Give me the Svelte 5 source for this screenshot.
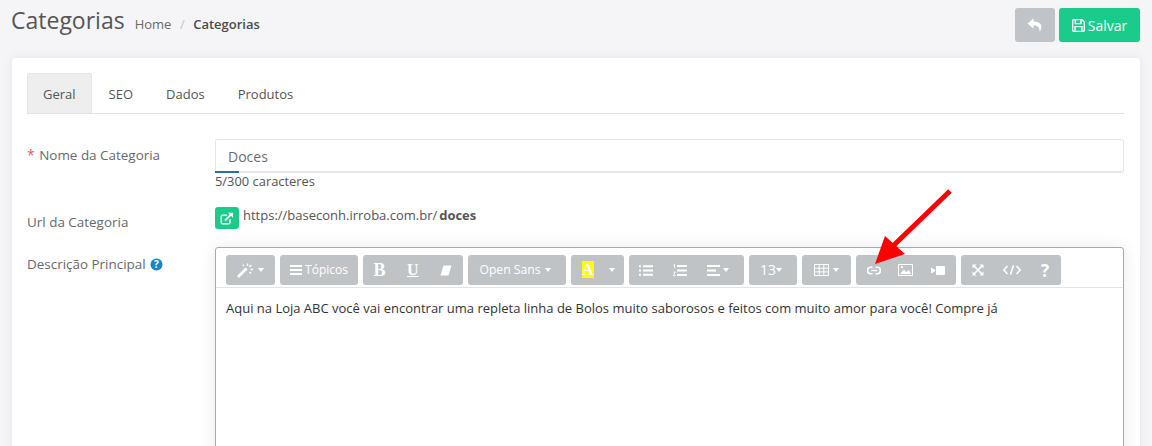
<script>
  const tabs = ['Geral', 'SEO', 'Dados', 'Produtos'];
</script>

<div class="page">
  <header class="top">
    <div class="heading">
      <h1>Categorias</h1>
      <nav class="crumbs"><span>Home</span><i>/</i><b>Categorias</b></nav>
    </div>
    <div class="actions">
      <button class="back" aria-label="Voltar">
        <svg width="16" height="14" viewBox="0 0 16 14"><path d="M6.5 0.5 L0.5 5.5 L6.5 10.5 V7.5 C10 7.3 12.6 8.6 12.7 13.5 C15.5 10 15.8 3.6 6.5 3.4 Z" fill="#fff"/></svg>
      </button>
      <button class="save">
        <svg width="13" height="13" viewBox="0 0 13 13"><path d="M1.5 .7H10L12.3 3V11.5a.8.8 0 0 1-.8.8H1.5a.8.8 0 0 1-.8-.8V1.5a.8.8 0 0 1 .8-.8Z" fill="none" stroke="#fff" stroke-width="1.3"/><path d="M3.2 1V4.7H9V1M3 12V7.7H10V12" fill="none" stroke="#fff" stroke-width="1.3"/></svg>
        Salvar
      </button>
    </div>
  </header>

  <section class="card">
    <ul class="tabs">
      {#each tabs as t, i}
        <li class:active={i === 0}>{t}</li>
      {/each}
    </ul>

    <div class="row name">
      <div class="label"><em>*</em> Nome da Categoria</div>
      <div class="field">
        <div class="input">Doces<span class="focus"></span></div>
        <div class="count">5/300 caracteres</div>
      </div>
    </div>

    <div class="row url">
      <div class="label">Url da Categoria</div>
      <div class="urlval">
        <span class="ext">
          <svg width="14" height="13" viewBox="0 0 14 13"><path d="M10 7.5V10.5a1.3 1.3 0 0 1-1.3 1.3H2.6a1.3 1.3 0 0 1-1.3-1.3V4.6a1.3 1.3 0 0 1 1.3-1.3H7" fill="none" stroke="#fff" stroke-width="1.5"/><path d="M5 8.5 11 2.5" stroke="#fff" stroke-width="1.8"/><path d="M8 .8H13V5.8Z" fill="#fff"/></svg>
        </span>
        <span class="link">https://baseconh.irroba.com.br/ <b>doces</b></span>
      </div>
    </div>

    <div class="row desc">
      <div class="label">Descrição Principal
        <svg class="help" width="13" height="13" viewBox="0 0 13 13"><circle cx="6.5" cy="6.5" r="6" fill="#1c84c6"/><text x="6.5" y="10" text-anchor="middle" font-size="10" font-weight="700" font-family="Open Sans" fill="#fff">?</text></svg>
      </div>
      <div class="editor">
        <div class="toolbar">
          <div class="grp w49">
            <svg width="17" height="15" viewBox="0 0 17 15"><path d="M1 14 9.5 5.5" stroke="#fff" stroke-width="2.8"/><path d="M6 1.5 6.5 3M10.5 .5V3M14.5 2 12.5 4M16 6.5H13.5M14 10.5 12.5 9" stroke="#fff" stroke-width="1.5"/></svg>
            <span class="caret"></span>
          </div>
          <div class="grp w78 txt">
            <svg width="12" height="10" viewBox="0 0 12 10"><path d="M0 1H12M0 5H12M0 9H12" stroke="#fff" stroke-width="2"/></svg>
            <span class="lbl">Tópicos</span>
          </div>
          <div class="grp w100 spread">
            <span class="serif">B</span>
            <span class="serif u">U</span>
            <svg width="12" height="11" viewBox="0 0 12 11"><path d="M3.5 .5H11.5L8.5 10.5H.5Z" fill="#fff"/></svg>
          </div>
          <div class="grp w98 txt shift">
            <span class="lbl font">Open Sans</span><span class="caret"></span>
          </div>
          <div class="grp w53 color">
            <span class="hl">A</span><span class="caret"></span>
          </div>
          <div class="grp w115 spread lists">
            <svg width="14" height="11" viewBox="0 0 14 11"><path d="M0 1.2H2M0 5.5H2M0 9.8H2M4 1.2H14M4 5.5H14M4 9.8H14" stroke="#fff" stroke-width="2"/></svg>
            <svg width="14" height="13" viewBox="0 0 14 13"><path d="M4 2H14M4 6.5H14M4 11H14" stroke="#fff" stroke-width="2"/><path d="M.5 .8 1.5 .3V4M.3 8H2.4L.3 11.6H2.6" fill="none" stroke="#fff" stroke-width=".9"/></svg>
            <span class="align"><svg width="13" height="11" viewBox="0 0 13 11"><path d="M0 1H13M0 5.5H9M0 10H13" stroke="#fff" stroke-width="2"/></svg><span class="caret"></span></span>
          </div>
          <div class="grp w48 txt shift">
            <span class="lbl size">13</span><span class="caret tight"></span>
          </div>
          <div class="grp w49">
            <svg width="15" height="12" viewBox="0 0 15 12"><path d="M.5.5H14.5V11.5H.5ZM.5 4.2H14.5M.5 7.9H14.5M5.2.5V11.5M9.8.5V11.5" fill="none" stroke="#fff"/></svg>
            <span class="caret"></span>
          </div>
          <div class="grp w100 spread">
            <svg width="14" height="9" viewBox="0 0 15 9"><path d="M6 1H4a3.5 3.5 0 0 0 0 7H6M9 1H11a3.5 3.5 0 0 1 0 7H9M4.5 4.5H10.5" fill="none" stroke="#fff" stroke-width="1.8"/></svg>
            <svg width="15" height="12" viewBox="0 0 15 12"><path d="M.5.5H14.5V11.5H.5Z" fill="none" stroke="#fff"/><path d="M2 10 6 5.5 8.5 8 11 6 13 10Z" fill="#fff"/><circle cx="4" cy="3.2" r="1.1" fill="#fff"/></svg>
            <svg width="14" height="9" viewBox="0 0 14 9"><rect x="5" y="0" width="9" height="9" rx="1" fill="#fff"/><path d="M0 1.5 4 3.7V5.3L0 7.5Z" fill="#fff"/></svg>
          </div>
          <div class="grp w100 spread last">
            <svg width="12" height="12" viewBox="0 0 12 12"><path d="M.5.5H4.5L.5 4.5ZM11.5.5H7.5L11.5 4.5ZM.5 11.5H4.5L.5 7.5ZM11.5 11.5H7.5L11.5 7.5Z" fill="#fff"/><path d="M2 2 10 10M10 2 2 10" stroke="#fff" stroke-width="1.6"/></svg>
            <svg width="18" height="10" viewBox="0 0 18 10"><path d="M4.5 1 .8 5 4.5 9M13.5 1 17.2 5 13.5 9M10.5 .3 7.5 9.7" fill="none" stroke="#fff" stroke-width="1.5"/></svg>
            <span class="q">?</span>
          </div>
        </div>
        <div class="content">Aqui na Loja ABC você vai encontrar uma repleta linha de Bolos muito saborosos e feitos com muito amor para você! Compre já</div>
      </div>
    </div>
  </section>

  <svg class="arrow" width="90" height="86" viewBox="0 0 90 86">
    <path d="M80 4 24 58" stroke="#f00" stroke-width="5"/>
    <path d="M5 77 15 49 35 67Z" fill="#f00"/>
  </svg>
</div>

<style>
  :global(body) { margin: 0; }
  .page {
    position: relative;
    width: 1152px;
    height: 446px;
    overflow: hidden;
    background: #f5f5f7;
    font-family: "Open Sans", sans-serif;
    font-size: 13px;
    color: #5c5c5c;
    box-sizing: border-box;
    padding: 0 12px;
  }
  .top {
    height: 58px;
    display: flex;
    justify-content: space-between;
    align-items: flex-start;
    box-sizing: border-box;
  }
  .heading { display: flex; align-items: baseline; margin-left: -1px; padding-top: 4px; }
  h1 { margin: 0; font-size: 23px; font-weight: 400; color: #555; line-height: 33px; }
  .crumbs { margin-left: 10px; font-size: 13px; color: #676a6c; }
  .crumbs i { font-style: normal; color: #c4c4c4; margin: 0 8.5px; }
  .crumbs b { font-weight: 600; color: #4c4c4c; }
  .actions { display: flex; gap: 4px; padding-top: 8px; }
  button {
    height: 34px;
    border: 0;
    border-radius: 3px;
    color: #fff;
    font: inherit;
    font-size: 14px;
    display: flex;
    align-items: center;
    justify-content: center;
    padding: 0;
  }
  .back { width: 40px; background: #c0c4c8; }
  .save { width: 81px; background: #1bcb8c; gap: 3px; }
  .card {
    height: 420px;
    background: #fff;
    border-radius: 4px;
    padding: 15px 16px 0 15px;
    box-shadow: 0 0 12px rgba(0, 0, 0, 0.07);
    box-sizing: border-box;
  }
  .tabs {
    list-style: none;
    margin: 0;
    padding: 0;
    display: flex;
    gap: 1px;
    height: 41px;
    border-bottom: 1px solid #e4e4e8;
    box-sizing: border-box;
  }
  .tabs li {
    height: 40px;
    line-height: 41px;
    padding: 0 15px;
    border: 1px solid transparent;
    border-bottom: 0;
    border-radius: 3px 3px 0 0;
    box-sizing: border-box;
    color: #555;
  }
  .tabs li.active { background: #eee; border-color: #e4e4e8; }
  .row { display: flex; }
  .label { width: 188px; flex: none; color: #676a6c; font-size: 13.45px; }
  .label em { font-style: normal; color: #f0544f; font-size: 14px; margin-right: 1px; }
  .name { margin-top: 25px; }
  .name .label { padding-top: 6px; }
  .field { flex: 1; }
  .input {
    position: relative;
    height: 34px;
    border: 1px solid #e5e6e7;
    border-bottom: 2px solid #e6e6ee;
    border-radius: 3px;
    box-sizing: border-box;
    padding: 0 12px;
    line-height: 34px;
    font-size: 14px;
    color: #6a6e72;
  }
  .focus {
    position: absolute;
    left: -1px;
    bottom: -2px;
    width: 24px;
    height: 2px;
    background: #2d6ca8;
  }
  .count { line-height: 16px; color: #555; font-size: 12.9px; }
  .url { margin-top: 18px; }
  .url .label { padding-top: 6px; }
  .urlval { display: flex; gap: 4px; align-items: flex-start; }
  .ext {
    width: 24px;
    height: 22px;
    border-radius: 3px;
    background: #1bcb8c;
    display: flex;
    align-items: center;
    justify-content: center;
  }
  .link { line-height: 16px; color: #555; }
  .link b { font-weight: 700; margin-left: -1.5px; }
  .desc { margin-top: 16px; }
  .desc .label { padding-top: 8px; }
  .help { vertical-align: -2px; margin-left: 1px; }
  .editor {
    flex: 1;
    height: 300px;
    border: 1px solid #a9a9a9;
    border-radius: 3px;
    box-sizing: border-box;
    box-shadow: 0 0 16px rgba(0, 0, 0, 0.09);
    background: #fff;
  }
  .toolbar {
    display: flex;
    gap: 5px;
    height: 40px;
    padding: 7px 0 0 10px;
    box-sizing: border-box;
    border-bottom: 1px solid #e4e4e4;
  }
  .grp {
    height: 30px;
    border-radius: 3px;
    background: #bfc3c6;
    color: #fff;
    font-size: 12px;
    display: flex;
    align-items: center;
    justify-content: center;
    box-sizing: border-box;
    gap: 3px;
  }
  .w48 { width: 48px; }
  .w49 { width: 49px; }
  .w53 { width: 53px; }
  .w78 { width: 78px; }
  .w98 { width: 98px; }
  .w100 { width: 100px; }
  .w115 { width: 115px; }
  .shift { padding-right: 4px; }
  .spread { justify-content: space-between; padding: 0 11px 0 10.5px; }
  .spread.lists { padding: 0 15px 0 10px; }
  .spread.last { padding: 0 12px 0 11px; }
  .txt .lbl { line-height: 30px; }
  .lbl.font { font-size: 12.2px; }
  .lbl.size { font-size: 14px; }
  .caret {
    display: inline-block;
    border-left: 3.75px solid transparent;
    border-right: 3.75px solid transparent;
    border-top: 4.5px solid #fff;
    margin-left: 1px;
  }
  .caret.tight { margin-left: -3px; }
  .serif { font: 700 18px "Liberation Serif", serif; }
  .serif.u { text-decoration: underline; font-size: 16px; }
  .color { justify-content: space-between; padding: 0 9px 0 11px; }
  .hl {
    background: #ff0;
    color: #fff;
    font: 700 16px/17px "Liberation Serif", serif;
    margin-top: -1px;
  }
  .align { display: flex; align-items: center; gap: 2px; }
  .q { font-weight: 700; font-size: 17px; }
  .content { padding: 10px 10px; line-height: 20px; font-size: 13px; color: #333; }
  .arrow { position: absolute; left: 870px; top: 187px; }
</style>
